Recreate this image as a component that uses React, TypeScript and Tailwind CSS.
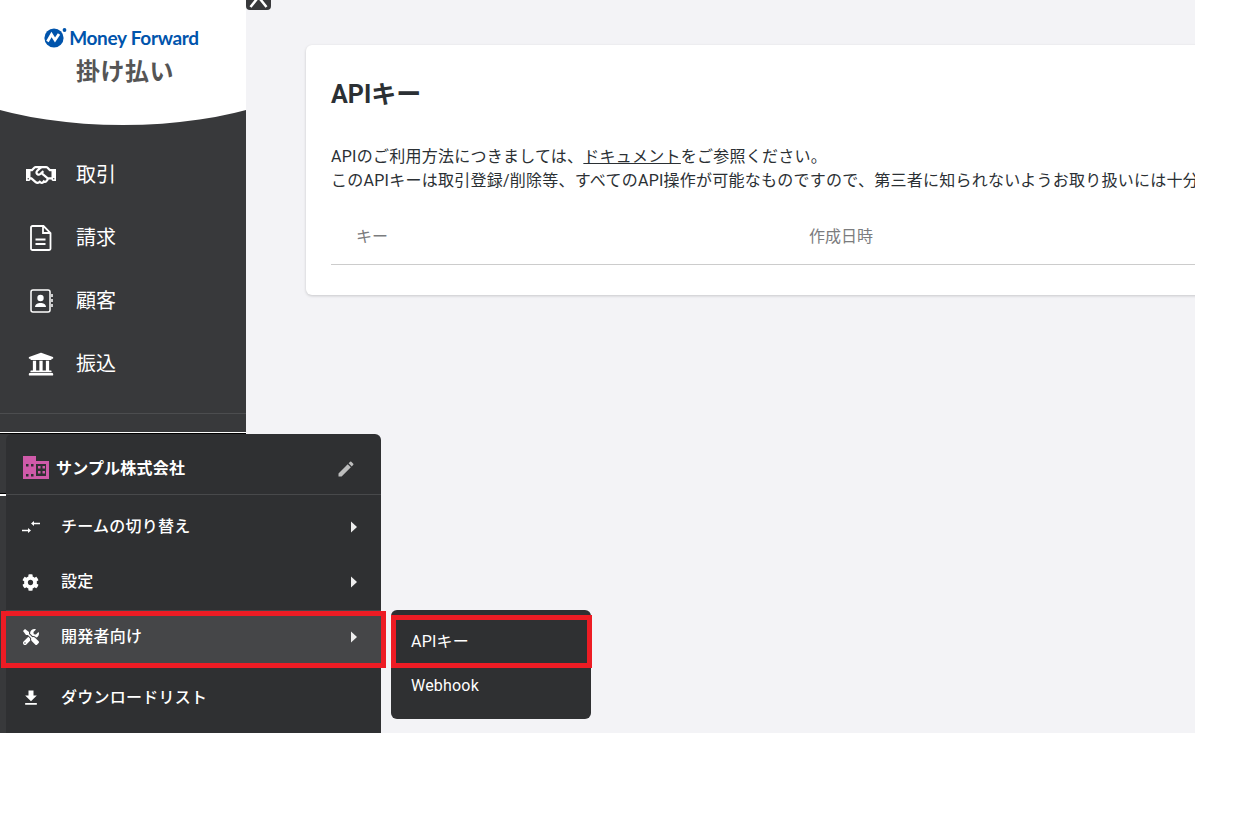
import { FaCog, FaTools, FaRegHandshake, FaUniversity } from "react-icons/fa";
import { MdEdit, MdFileDownload } from "react-icons/md";

const font = "font-['Roboto','Noto_Sans_CJK_JP',sans-serif]";

const MenuRow = ({ icon, label, arrow = true, active = false, className = "" }: { icon: React.ReactNode; label: string; arrow?: boolean; active?: boolean; className?: string }) => (
  <div className={`h-[55px] flex items-center pl-4 pr-[23px] pb-[1px] ${active ? "bg-[#454648]" : ""} ${className}`}>
    <div className="w-[39px] flex items-center">{icon}</div>
    <span className="flex-1 text-[16px] font-medium text-white tracking-[0.25px]">{label}</span>
    {arrow && (
      <svg width="8" height="12" viewBox="0 0 8 12">
        <path d="M1 0.5 L7 6 L1 11.5 Z" fill="#eeeeee" />
      </svg>
    )}
  </div>
);

const NavRow = ({ icon, label }: { icon: React.ReactNode; label: string }) => (
  <div className="h-[63px] flex items-center pl-[26px]">
    <div className="w-[50px] flex items-center">{icon}</div>
    <span className="text-[20px] text-white">{label}</span>
  </div>
);

export default function App() {
  return (
    <div className={`w-[1234px] h-[816px] bg-white overflow-hidden ${font}`}>
      <div className="relative w-[1195px] h-[733px] bg-[#f3f3f6] flex overflow-hidden">
        <aside className="w-[246px] h-full bg-[#38393b] flex flex-col shrink-0 overflow-hidden">
          <div className="w-[400px] h-[125px] shrink-0 -ml-[77px] bg-white rounded-b-[200px_71px] flex flex-col items-center pt-[24px]">
            <div className="flex items-center gap-[1px] h-[26px] ml-[-3px]">
              <svg width="24" height="22" viewBox="0 0 24 22">
                <circle cx="10" cy="12" r="9.6" fill="#0054ac" />
                <path d="M3.5 15.5 L7.5 8.5 L11 14 L15 8" fill="none" stroke="#fff" strokeWidth="2.8" />
                <circle cx="20.5" cy="4" r="1.9" fill="#0054ac" />
              </svg>
              <span className="text-[19px] font-bold text-[#0054ac] tracking-[-0.3px] leading-none font-['Lato',sans-serif]">Money Forward</span>
            </div>
            <div className="mt-[5px] ml-[4px] text-[24px] font-bold text-[#555555] tracking-[0.5px] leading-[34px]">掛け払い</div>
          </div>
          <nav className="pt-[18px] flex flex-col shrink-0">
            <NavRow icon={<FaRegHandshake size={30} color="#fff" />} label="取引" />
            <NavRow
              icon={
                <svg width="22" height="26" viewBox="0 0 22 26" className="ml-[4px]">
                  <path d="M2.5 1h11L20.5 8v15.5a1.5 1.5 0 0 1-1.5 1.5H2.5A1.5 1.5 0 0 1 1 23.5V2.5A1.5 1.5 0 0 1 2.5 1zM13 1.5V8h7" fill="none" stroke="#fff" strokeWidth="1.8" />
                  <path d="M5.5 14.5h10M5.5 19h10" stroke="#fff" strokeWidth="2" />
                </svg>
              }
              label="請求"
            />
            <NavRow
              icon={
                <svg width="24" height="24" viewBox="0 0 24 24" className="ml-[4px]">
                  <rect x="1" y="1" width="19" height="22" rx="2" fill="none" stroke="#fff" strokeWidth="1.5" />
                  <circle cx="10.5" cy="9" r="3.2" fill="#fff" />
                  <path d="M5 18 C5 12.5 16 12.5 16 18 Z" fill="#fff" />
                  <path d="M22 5v3M22 10v3M22 15v3" stroke="#fff" strokeWidth="1.5" />
                </svg>
              }
              label="顧客"
            />
            <NavRow icon={<FaUniversity size={26} color="#fff" className="ml-[2px]" />} label="振込" />
          </nav>
          <div className="mt-[18px] h-[19px] shrink-0 border-t border-[#4c4d4f]" />
          <div className="h-[1px] shrink-0 bg-white" />
          <div className="h-[1px] shrink-0 bg-black" />
          <div className="h-[59px] shrink-0" />
          <div className="h-[1px] shrink-0 bg-black" />
          <div className="h-[2px] shrink-0 bg-white" />
        </aside>

        <main className="flex-1 pl-[60px] pt-[45px]">
          <section className="w-[1000px] h-[250px] bg-white rounded-md shadow-[0_1px_3px_rgba(0,0,0,0.18)] px-[25px] text-[#2b3034]">
            <h1 className="pt-[33px] text-[25px] font-bold leading-[34px]">APIキー</h1>
            <div className="mt-[33px] text-[16px] leading-[24px] tracking-[0.25px] whitespace-nowrap">
              <p>
                APIのご利用方法につきましては、<span className="underline">ドキュメント</span>をご参照ください。
              </p>
              <p>このAPIキーは取引登録/削除等、すべてのAPI操作が可能なものですので、第三者に知られないようお取り扱いには十分</p>
            </div>
            <div className="mt-[16px] h-[56px] border-b border-[#cccccc] flex items-center text-[16px] text-[#7b7c7e]">
              <div className="w-[478px] pl-[25px]">キー</div>
              <div>作成日時</div>
            </div>
          </section>
        </main>

        <button className="absolute left-[246px] top-[-10px] w-[25px] h-[20px] bg-[#38393b] rounded-b-[4px] overflow-hidden">
          <svg width="25" height="20" viewBox="0 0 25 20">
            <path d="M4.5 17 L12.5 7 L20.5 17" fill="none" stroke="#fff" strokeWidth="2.5" />
          </svg>
        </button>

        <div className="absolute left-[6px] top-[434px] w-[375px] h-[310px] bg-[#2f3032] rounded-md">
          <div className="h-[61px] border-b border-[#48494b] flex items-center pl-[17px] pr-[25px] pt-[9px]">
            <svg width="26" height="23" viewBox="0 0 26 23" className="mr-[7px] mb-[2px]">
              <path d="M0 0h13v5h13v18H0z" fill="#cf5aa9" />
              <path d="M3 8h2.5v2.5H3zM8 8h2.5v2.5H8zM3 18h2.5v2.5H3zM8 18h2.5v2.5H8z" fill="#2f3032" />
              <path fillRule="evenodd" d="M13 8h10v12H13zM15 10v2.5h2.5V10zM19.5 10v2.5H22V10zM15 15v2.5h2.5V15zM19.5 15v2.5H22V15z" fill="#2f3032" />
            </svg>
            <span className="flex-1 text-[16px] font-bold text-white tracking-[0.2px]">サンプル株式会社</span>
            <MdEdit size={20} color="#bdbdbd" />
          </div>
          <div className="pt-[5px]">
            <MenuRow
              icon={
                <svg width="18" height="12" viewBox="0 0 18 12">
                  <path d="M0 9.5h7" fill="none" stroke="#fff" strokeWidth="1.5" />
                  <path d="M6 7l3 2.5-3 2.5z" fill="#fff" />
                  <path d="M18 2.5h-7" fill="none" stroke="#fff" strokeWidth="1.5" />
                  <path d="M12 0L9 2.5 12 5z" fill="#fff" />
                </svg>
              }
              label="チームの切り替え"
            />
            <MenuRow icon={<FaCog size={17} color="#fff" />} label="設定" />
            <MenuRow active icon={<FaTools size={16} color="#fff" className="ml-[1px]" />} label="開発者向け" />
            <MenuRow arrow={false} icon={<MdFileDownload size={20} color="#fff" className="-ml-[1px]" />} label="ダウンロードリスト" className="mt-[6px]" />
          </div>
        </div>

        <div className="absolute left-[391px] top-[610px] w-[200px] h-[109px] bg-[#2f3032] rounded-md pt-[10px] flex flex-col text-white text-[16px] tracking-[0.2px]">
          <div className="h-[44px] flex items-center pl-5">APIキー</div>
          <div className="h-[44px] flex items-center pl-5">Webhook</div>
        </div>

        <div className="absolute left-[1px] top-[611px] w-[385px] h-[57px] border-[5px] border-[#ed1c24]" />
        <div className="absolute left-[391px] top-[615px] w-[201px] h-[53px] border-[5px] border-[#ed1c24]" />
      </div>
    </div>
  );
}
